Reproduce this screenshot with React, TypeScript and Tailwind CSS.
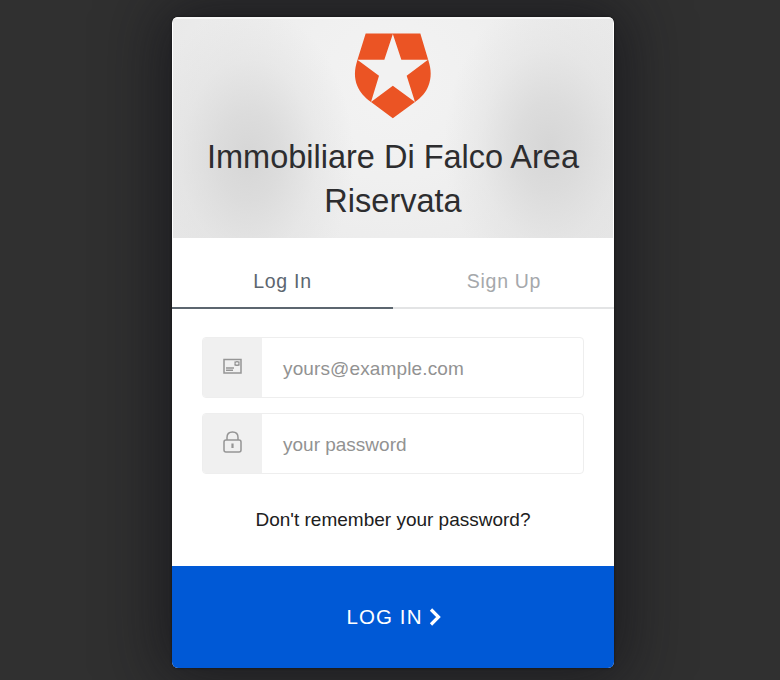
import React from 'react';

function Shield() {
  return (
    <svg className="h-[86px] w-[78px]" viewBox="42 39 234 258">
      <path d="M77 40.500H241L265 121C274 149 275 174 265 198C257 219 245 231 225 246L158.500 295L93 246C73 231 61 219 52 198C42 174 43 149 52 121Z" fill="#eb5424" />
      <path d="M158.500 42L184 119.500H264L200 167L225 246L158.500 197L93 246L117 167L52 119.500H133Z" fill="#f2f2f2" />
    </svg>
  );
}

function MailIcon() {
  return (
    <svg className="h-4 w-[19px]" viewBox="0 0 19 16" fill="none" stroke="#959595">
      <path d="M1 1.500H18V15H1Z" strokeWidth="1.5" />
      <path d="M3 10H11M3 12.300H10" strokeWidth="1.4" />
      <circle cx="14" cy="5.500" r="2" strokeWidth="1.2" />
      <path d="M11 4H17M11 7H17" strokeWidth=".7" />
    </svg>
  );
}

function LockIcon() {
  return (
    <svg className="h-[22px] w-[19px]" viewBox="0 0 19 22" fill="none" stroke="#959595" strokeWidth="1.5">
      <rect x="1" y="9" width="17" height="12" rx="2" />
      <path d="M4 9V6.500C4 3 6.200 1 9.500 1S15 3 15 6.500V9" />
      <path d="M9.500 12.500V17" strokeWidth="2.2" />
    </svg>
  );
}

function Field({ icon, text, textClass }: { icon: React.ReactNode; text: string; textClass: string }) {
  return (
    <div className="flex h-[61px] overflow-hidden rounded-[4px] border border-[#eeeeee]">
      <div className="flex w-[59px] items-center justify-center bg-[#f0f0f0] pb-[3px]">{icon}</div>
      <div className={`flex items-center pl-[21px] pt-[3px] text-[#929292] ${textClass}`}>{text}</div>
    </div>
  );
}

export default function App() {
  return (
    <main className="flex h-[680px] w-[780px] justify-center overflow-hidden bg-[#303030] pl-[6px] pt-[17px] font-['Liberation_Sans',Arial,sans-serif]">
      <section className="flex h-[651px] w-[442px] flex-col overflow-hidden rounded-[6px] bg-white shadow-[0_0_3px_rgba(0,0,0,0.5),0_0_62px_12px_rgba(16,16,22,0.62)]">
        <header className="mx-px flex h-[221px] flex-col items-center border-t-2 border-[#f6f6f6] bg-[radial-gradient(ellipse_105px_150px_at_76px_138px,#d6d6d6_0%,#d8d8d8cc_30%,#dedede66_65%,#e8e8e800_100%),radial-gradient(ellipse_105px_150px_at_376px_128px,#d6d6d6_0%,#d8d8d8cc_30%,#dedede66_65%,#e8e8e800_100%),radial-gradient(circle_at_50%_30%,#f3f3f3_0%,#f0f0f0_35%,#e7e7e7_100%)] pt-[14px]">
          <Shield />
          <h1 className="mt-4 w-[400px] text-center text-[32.5px] leading-[44px] text-[#2d2d2f]">Immobiliare Di Falco Area Riservata</h1>
        </header>
        <nav className="flex h-[71px] text-[19.5px]">
          <div className="flex w-[221px] items-center justify-center border-b-2 border-[#5c666f] pt-[18px] tracking-[0.7px] text-[#5c666f]">Log In</div>
          <div className="flex w-[221px] items-center justify-center border-b-2 border-[#e3e4e5] pl-px pt-[18px] tracking-[0.7px] text-[#a5a8ab]">Sign Up</div>
        </nav>
        <div className="flex flex-col gap-[15px] px-[30px] pt-7">
          <Field icon={<MailIcon />} text="yours@example.com" textClass="text-[19px] tracking-[0.13px]" />
          <Field icon={<LockIcon />} text="your password" textClass="text-[19px]" />
        </div>
        <p className="mt-[34px] text-center text-[19px] leading-[24px] text-[#202020]">Don't remember your password?</p>
        <button className="mt-auto flex h-[102px] w-full items-center justify-center bg-[#0059d6] pl-[2px] text-[20.5px] tracking-[1.1px] text-white">
          <span>LOG IN</span>
          <svg className="ml-[6px] h-[18px] w-[13px]" viewBox="0 0 13 18" fill="none" stroke="white" strokeWidth="3.200">
            <path d="M2 1.500L9.500 9L2 16.500" />
          </svg>
        </button>
      </section>
    </main>
  );
}
